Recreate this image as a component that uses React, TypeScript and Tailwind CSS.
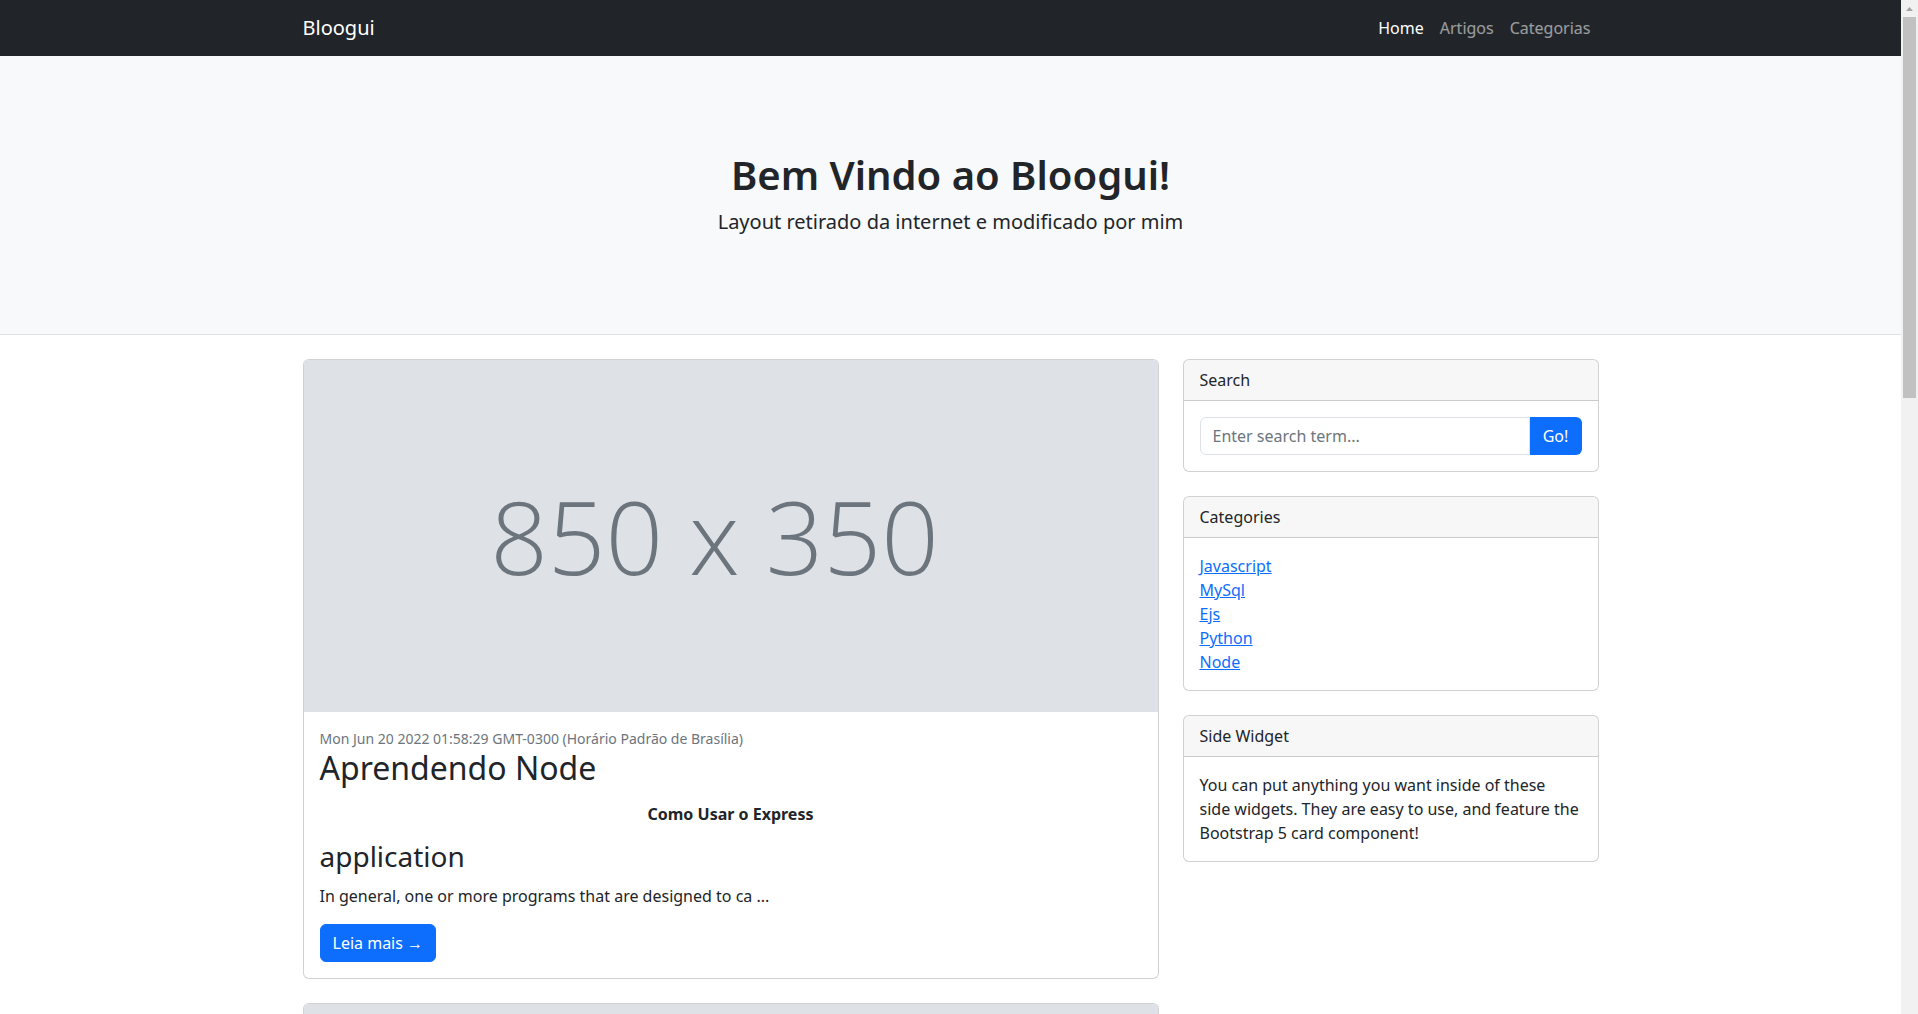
import React from "react";

const categories = ["Javascript", "MySql", "Ejs", "Python", "Node"];

function Placeholder() {
  return (
    <div className="h-[352px] bg-[#dee2e6] flex items-center justify-center pr-[32px]">
      <span className="font-['Open_Sans',sans-serif] font-light text-[101px] leading-none text-[#6c757d]">
        850 x 350
      </span>
    </div>
  );
}

function PostCard() {
  return (
    <div className="border border-black/[.175] rounded-md overflow-hidden mb-6 bg-white">
      <Placeholder />
      <div className="p-4">
        <div className="text-sm leading-[21px] text-[#6c757d]">
          Mon Jun 20 2022 01:58:29 GMT-0300 (Horário Padrão de Brasília)
        </div>
        <h2 className="text-[32px] leading-[1.2]">Aprendendo Node</h2>
        <p className="mt-[15px] text-center font-bold leading-6">Como Usar o Express</p>
        <h3 className="mt-[14px] mb-[10px] text-[28px] leading-[1.2]">application</h3>
        <p className="leading-6 mb-4">
          In general, one or more programs that are designed to ca ...
        </p>
        <button className="bg-[#0d6efd] text-white rounded-md px-3 py-1.5 leading-6 border border-[#0d6efd]">
          Leia mais →
        </button>
      </div>
    </div>
  );
}

function SideCard({ title, children }: { title: string; children: React.ReactNode }) {
  return (
    <div className="border border-black/[.175] rounded-md overflow-hidden mb-6 bg-white">
      <div className="px-4 py-2 leading-6 bg-black/[.03] border-b border-black/[.175]">{title}</div>
      <div className="p-4">{children}</div>
    </div>
  );
}

function Scrollbar() {
  return (
    <div className="w-[17px] shrink-0 bg-[#f1f1f1] flex flex-col items-center">
      <div className="h-[17px] flex items-center justify-center">
        <svg width="9" height="6" viewBox="0 0 9 6">
          <path d="M4.5 1 L8 5 L1 5 Z" fill="#a3a3a3" />
        </svg>
      </div>
      <div className="w-[13px] h-[381px] bg-[#c1c1c1]" />
    </div>
  );
}

export default function App() {
  return (
    <div className="flex h-screen overflow-hidden bg-white text-[#212529] font-['Noto_Sans',sans-serif] text-base">
      <div className="flex-1 min-w-0 overflow-hidden">
        <nav className="bg-[#212529] h-14">
          <div className="w-[1320px] mx-auto px-3 h-full flex items-center justify-between">
            <span className="text-xl text-white">Bloogui</span>
            <ul className="flex">
              <li className="px-2 text-white">Home</li>
              <li className="px-2 text-white/55">Artigos</li>
              <li className="px-2 text-white/55">Categorias</li>
            </ul>
          </div>
        </nav>

        <header className="bg-[#f8f9fa] border-b border-[#dee2e6] pt-[95px] pb-[97px] text-center">
          <h1 className="text-[40px] leading-[1.2] font-semibold mb-2">Bem Vindo ao Bloogui!</h1>
          <p className="text-xl leading-[30px]">Layout retirado da internet e modificado por mim</p>
        </header>

        <main className="w-[1320px] mx-auto px-3 mt-6 flex gap-6">
          <div className="w-[856px] shrink-0">
            <PostCard />
            <div className="border border-black/[.175] rounded-md overflow-hidden bg-white">
              <div className="h-[352px] bg-[#dee2e6]" />
            </div>
          </div>
          <aside className="w-[416px] shrink-0">
            <SideCard title="Search">
              <div className="flex">
                <input
                  className="flex-1 min-w-0 h-[38px] border border-[#dee2e6] rounded-l-md px-3 placeholder:text-[#6c757d] outline-none"
                  placeholder="Enter search term..."
                />
                <button className="w-[52px] h-[38px] bg-[#0d6efd] text-white rounded-r-md">Go!</button>
              </div>
            </SideCard>
            <SideCard title="Categories">
              <ul>
                {categories.map((c) => (
                  <li key={c} className="leading-6">
                    <a href="#" className="text-[#0d6efd] underline">
                      {c}
                    </a>
                  </li>
                ))}
              </ul>
            </SideCard>
            <SideCard title="Side Widget">
              <p className="leading-6">
                You can put anything you want inside of these
                <br />
                side widgets. They are easy to use, and feature the
                <br />
                Bootstrap 5 card component!
              </p>
            </SideCard>
          </aside>
        </main>
      </div>
      <Scrollbar />
    </div>
  );
}
